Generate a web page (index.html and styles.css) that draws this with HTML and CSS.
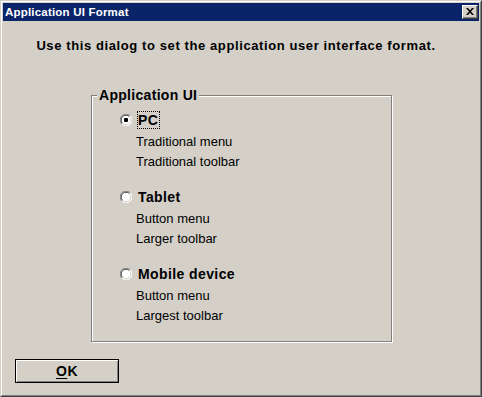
FILE: index.html
```html
<!DOCTYPE html>
<html>
<head>
<meta charset="utf-8">
<link rel="stylesheet" href="styles.css">
</head>
<body>
<div class="window">
  <div class="frame">
    <div class="titlebar">
      <span class="title">Application UI Format</span>
      <span class="close-btn">
        <svg width="8" height="7" viewBox="0 0 8 7"><path d="M0 0h2l2 2.2L6 0h2L5 3.5 8 7H6L4 4.8 2 7H0l3-3.5z" fill="#000"/></svg>
      </span>
    </div>
    <div class="body">
      <div class="intro">Use this dialog to set the application user interface format.</div>
      <div class="group">
        <span class="legend">Application UI</span>
        <div class="option">
          <div class="radio-row">
            <svg class="radio" width="12" height="12" viewBox="0 0 12 12">
              <circle cx="6" cy="6" r="5.5" fill="#fff"/>
              <path d="M1.8 10.2A5.5 5.5 0 0 1 10.2 1.8" fill="none" stroke="#808080" stroke-width="1"/>
              <path d="M2.6 9.4A4.5 4.5 0 0 1 9.4 2.6" fill="none" stroke="#404040" stroke-width="1"/>
              <path d="M10.2 1.8A5.5 5.5 0 0 1 1.8 10.2" fill="none" stroke="#fff" stroke-width="1"/>
              <path d="M9.4 2.6A4.5 4.5 0 0 1 2.6 9.4" fill="none" stroke="#d4d0c8" stroke-width="1"/>
              <rect x="4" y="4" width="4" height="4" rx="1" fill="#000"/>
            </svg>
            <span class="radio-label focus">PC</span>
          </div>
          <div class="sub">Traditional menu</div>
          <div class="sub">Traditional toolbar</div>
        </div>
        <div class="option">
          <div class="radio-row">
            <svg class="radio" width="12" height="12" viewBox="0 0 12 12">
              <circle cx="6" cy="6" r="5.5" fill="#fff"/>
              <path d="M1.8 10.2A5.5 5.5 0 0 1 10.2 1.8" fill="none" stroke="#808080" stroke-width="1"/>
              <path d="M2.6 9.4A4.5 4.5 0 0 1 9.4 2.6" fill="none" stroke="#404040" stroke-width="1"/>
              <path d="M10.2 1.8A5.5 5.5 0 0 1 1.8 10.2" fill="none" stroke="#fff" stroke-width="1"/>
              <path d="M9.4 2.6A4.5 4.5 0 0 1 2.6 9.4" fill="none" stroke="#d4d0c8" stroke-width="1"/>
            </svg>
            <span class="radio-label">Tablet</span>
          </div>
          <div class="sub">Button menu</div>
          <div class="sub">Larger toolbar</div>
        </div>
        <div class="option">
          <div class="radio-row">
            <svg class="radio" width="12" height="12" viewBox="0 0 12 12">
              <circle cx="6" cy="6" r="5.5" fill="#fff"/>
              <path d="M1.8 10.2A5.5 5.5 0 0 1 10.2 1.8" fill="none" stroke="#808080" stroke-width="1"/>
              <path d="M2.6 9.4A4.5 4.5 0 0 1 9.4 2.6" fill="none" stroke="#404040" stroke-width="1"/>
              <path d="M10.2 1.8A5.5 5.5 0 0 1 1.8 10.2" fill="none" stroke="#fff" stroke-width="1"/>
              <path d="M9.4 2.6A4.5 4.5 0 0 1 2.6 9.4" fill="none" stroke="#d4d0c8" stroke-width="1"/>
            </svg>
            <span class="radio-label">Mobile device</span>
          </div>
          <div class="sub">Button menu</div>
          <div class="sub">Largest toolbar</div>
        </div>
      </div>
      <div class="button-row">
        <span class="ok-btn"><u>O</u>K</span>
      </div>
    </div>
  </div>
</div>
</body>
</html>
```
FILE: styles.css
```css
* { box-sizing: border-box; }
html, body {
  margin: 0;
  padding: 0;
  background: #d4d0c8;
}
body {
  font-family: "Liberation Sans", Arial, sans-serif;
  color: #000;
}
.window {
  width: 482px;
  height: 397px;
  border: 1px solid;
  border-color: #d4d0c8 #404040 #404040 #d4d0c8;
}
.frame {
  height: 100%;
  border: 1px solid;
  border-color: #fff #808080 #808080 #fff;
  padding: 1px;
  background: #d4d0c8;
  display: flex;
  flex-direction: column;
}
.titlebar {
  height: 18px;
  background: #0a246a;
  display: flex;
  align-items: center;
  justify-content: space-between;
  padding: 0 1px 0 2px;
}
.title {
  color: #fff;
  font-weight: bold;
  font-size: 11.5px;
  letter-spacing: 0.2px;
  line-height: 14px;
}
.close-btn {
  width: 16px;
  height: 14px;
  background: #d4d0c8;
  border: 1px solid;
  border-color: #fff #404040 #404040 #fff;
  box-shadow: inset -1px -1px 0 #808080;
  display: flex;
  align-items: center;
  justify-content: center;
  padding-right: 1px;
  padding-bottom: 1px;
}
.close-btn svg { display: block; }
.body {
  flex: 1;
  padding-top: 17px;
}
.intro {
  text-align: center;
  padding-right: 10px;
  font-size: 13px;
  font-weight: bold;
  line-height: 16px;
  letter-spacing: 0.6px;
}
.group {
  position: relative;
  margin-top: 41px;
  margin-left: 88px;
  width: 301px;
  height: 247px;
  border: 1px solid #808080;
  box-shadow: inset 1px 1px 0 #fff, 1px 1px 0 #fff;
  padding-top: 13px;
  padding-left: 28px;
  display: flex;
  flex-direction: column;
  gap: 15px;
}
.legend {
  position: absolute;
  top: -9px;
  left: 5px;
  padding: 0 2px;
  background: #d4d0c8;
  font-size: 14px;
  font-weight: bold;
  line-height: 16px;
  letter-spacing: 0.3px;
}
.option {
  display: flex;
  flex-direction: column;
}
.radio-row {
  height: 22px;
  display: flex;
  align-items: center;
  gap: 5px;
}
.radio { display: block; flex: none; }
.radio-label {
  font-size: 14px;
  font-weight: bold;
  line-height: 16px;
  letter-spacing: 0.4px;
  border: 1px dotted transparent;
  padding: 0 1px 0 0;
}
.radio-label.focus {
  border-color: #000;
}
.sub {
  padding-left: 16px;
  font-size: 13px;
  line-height: 20px;
  height: 20px;
  padding-top: 1px;
}
.button-row {
  margin-top: 17px;
  padding-left: 12px;
  display: flex;
}
.ok-btn {
  width: 104px;
  height: 24px;
  border: 1px solid #000;
  box-shadow: inset 1px 1px 0 #fff, inset -1px -1px 0 #808080;
  display: flex;
  align-items: center;
  justify-content: center;
  font-size: 14px;
  font-weight: bold;
  letter-spacing: 0.5px;
}
.ok-btn u { text-underline-offset: 2px; }
```
